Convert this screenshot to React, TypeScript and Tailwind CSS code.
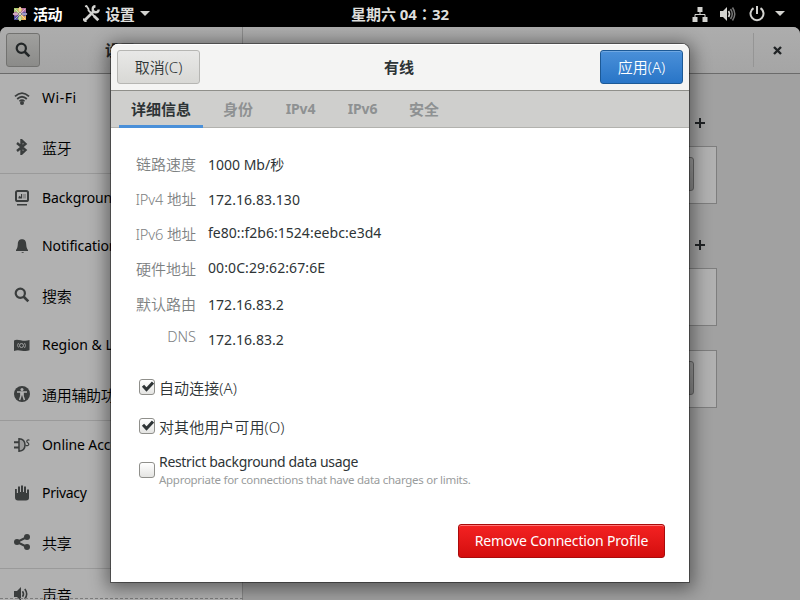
import type { ReactNode } from "react";

const FONT = "font-['Noto_Sans','Noto_Sans_CJK_SC',sans-serif]";

function Icon({ name }: { name: string }) {
  const stroke = { fill: "none", stroke: "currentColor", strokeWidth: 2 };
  return (
    <svg className="h-4 w-4 shrink-0" viewBox="0 0 16 16" fill="currentColor">
      {name === "wifi" && (
        <>
          <path d="M1 6.4Q8 -.2 15 6.4" {...stroke} strokeWidth={1.8} />
          <path d="M3.2 9Q8 4.5 12.8 9" {...stroke} strokeWidth={1.8} />
          <path d="M5.4 11.2Q8 9 10.6 11.2" {...stroke} strokeWidth={1.5} />
          <circle cx="8" cy="13" r="2" />
        </>
      )}
      {name === "bluetooth" && (
        <path d="M3 4l8.500 7-4 3.800V1.200l4 3.800L3 12" {...stroke} strokeWidth={2.4} />
      )}
      {name === "background" && (
        <>
          <rect x="2" y="1" width="12" height="10" rx="1.6" {...stroke} />
          <path d="M3 14h10v1.500H3zM4.500 8.500V7l1.200-1.200L7 7V4h1v4.500z" />
          <path d="M8.500 4H12v4.500H8.500z" opacity=".3" />
        </>
      )}
      {name === "bell" && (
        <path d="M8 1.200c-3.300 0-4 2.200-4.200 5C3.600 9.400 3.100 10.600 2 12v1h12v-1c-1.100-1.400-1.600-2.600-1.800-5.800C12 3.400 11.300 1.200 8 1.200zM7 14h3l-1 1z" />
      )}
      {name === "search" && (
        <>
          <circle cx="6.300" cy="6.300" r="4.600" {...stroke} strokeWidth={2.2} />
          <path d="M9.500 9.500l4.800 4.800" {...stroke} strokeWidth={2.6} />
        </>
      )}
      {name === "region" && (
        <>
          <path d="M0 3.500C4 1 9 5.500 15.500 3v10.200C10 15.500 5 11.500 0 14z" />
          <circle cx="7.500" cy="8.500" r="2" fill="none" stroke="#aaa" strokeWidth=".9" />
          <path d="M4.500 6Q2.500 8.500 4.500 10.500M10.500 6Q12.500 8.500 10.500 11" stroke="#999" strokeWidth="1" fill="none" />
        </>
      )}
      {name === "access" && (
        <>
          <circle cx="8" cy="8" r="8" />
          <circle cx="8" cy="3.600" r="1.500" fill="#b1b1b1" />
          <path d="M3 6h10M8 5.500v4M6.900 6.500v3.500L5.600 14M9.100 6.500v3.500l1.300 4" stroke="#b1b1b1" strokeWidth="1.500" fill="none" />
        </>
      )}
      {name === "online" && (
        <>
          <path d="M5 1.800c4 .3 6 2.800 6 6.200s-2 5.900-6 6.200z" fill="#9a9a9a" stroke="currentColor" strokeWidth="1.500" />
          <path d="M0 5.200h5M0 10.500h5" {...stroke} />
          <path d="M15.500 3.200c-2-.7-3 .2-2.700 1.500.3 1.200 2 1 2 2.500 0 1.200-1.300 1.800-3.300 1.200" {...stroke} strokeWidth={1.200} />
        </>
      )}
      {name === "privacy" && (
        <path d="M1 4h1.800v4H4V1.500h2V7h1V.5h2V7h1V1.500h2V8h1V4.500h2v8.500c0 1.500-1 2.500-3 2.500H4c-2 0-3-1-3-3z" />
      )}
      {name === "share" && (
        <>
          <circle cx="3" cy="8" r="3" />
          <circle cx="13" cy="3" r="3" />
          <circle cx="13" cy="13" r="3" />
          <path d="M13 3L3 8l10 5" {...stroke} />
        </>
      )}
      {name === "sound" && (
        <>
          <path d="M0 5h3l4-4v14l-4-4H0z" />
          <path d="M8.500 5.200q2 2.800 0 5.600M10.800 3q3.800 5 0 10" {...stroke} strokeWidth={1.600} />
        </>
      )}
    </svg>
  );
}

const sidebar = [
  { icon: "wifi", text: "Wi-Fi", row: "h-[49px] pb-[2px]", font: "text-[14px] tracking-[.5px]" },
  { icon: "bluetooth", text: "蓝牙", row: "h-[51px] border-b border-[#9a9a9a] pb-[2px]", font: "font-[350] text-[15px] tracking-[-.3px] pt-[2px]" },
  { icon: "background", text: "Background", row: "h-[48px]", font: "text-[14px] tracking-[-.1px]" },
  { icon: "bell", text: "Notifications", row: "h-[49px] pb-[2px]", font: "text-[14px] tracking-[-.1px]" },
  { icon: "search", text: "搜索", row: "h-[50px] pb-[2px]", font: "font-[350] text-[15px] tracking-[-.3px] pt-[2px]" },
  { icon: "region", text: "Region & Language", row: "h-[48px]", font: "text-[14px]" },
  { icon: "access", text: "通用辅助功能", row: "h-[52px] border-b border-[#9a9a9a] pb-[2px]", font: "font-[350] text-[15px] tracking-[-.3px] pt-[2px]" },
  { icon: "online", text: "Online Accounts", row: "h-[48px]", font: "text-[14px] tracking-[-.1px]" },
  { icon: "privacy", text: "Privacy", row: "h-[49px] pb-[2px]", font: "text-[14px] tracking-[-.3px]" },
  { icon: "share", text: "共享", row: "h-[51px] border-b border-[#9a9a9a] pb-[2px]", font: "font-[350] text-[15px] tracking-[-.3px] pt-[2px]" },
  { icon: "sound", text: "声音", row: "h-[50px]", font: "font-[350] text-[15px] tracking-[-.3px] pt-px" },
];

function TopBar() {
  return (
    <header className="flex h-[27px] items-center bg-black text-[15px] font-bold text-[#dededc]">
      <div className="flex flex-1 items-center">
        <svg className="ml-3 h-4 w-4" viewBox="0 0 16 16">
          <path d="M2 2h5v5H2z" fill="#aacb72" />
          <path d="M9 2h5v5H9z" fill="#b774a6" />
          <path d="M2 9h5v5H2z" fill="#4d4ba0" />
          <path d="M9 9h5v5H9z" fill="#efb256" />
          <path d="M8 .5l2.500 3L8 7 5.500 3.500z" fill="#e9b96a" />
          <path d="M.5 8l3-2.500L7 8l-3.500 2.500z" fill="#b774a6" />
          <path d="M15.500 8l-3-2.500L9 8l3.500 2.500z" fill="#5d5aa8" />
          <path d="M8 15.500l2.500-3L8 9l-2.500 3.500z" fill="#aacb72" />
          <path d="M8 1v14M1 8h14" stroke="#f3ede0" strokeWidth=".9" />
          <path d="M3 3l10 10M13 3L3 13" stroke="#f3ede0" strokeWidth=".6" />
        </svg>
        <span className="ml-[5px] leading-5 text-white tracking-[-.4px]">活动</span>
        <svg className="ml-[21px] h-[17px] w-[17px]" viewBox="0 0 17 17" fill="none" stroke="#d3d3d0">
          <path d="M2 1.500l1.500-.5 2 3v1.500l6 6" strokeWidth="1.800" />
          <path d="M11 11l4.300 4.300M2 15L11 6" strokeWidth="2.800" />
          <path d="M12.500 1.300a3 3 0 1 0 3.200 3.200" strokeWidth="2.400" />
          <path d="M1 13.500a2 2 0 0 0 2.500 2.500" strokeWidth="2" />
        </svg>
        <span className="ml-[5px] leading-5 tracking-[-.4px]">设置</span>
        <svg className="ml-[6px] h-[5px] w-[10px]" viewBox="0 0 10 5"><path d="M0 0h10L5 5z" fill="#d3d3d0" /></svg>
      </div>
      <span className="w-[100px] whitespace-nowrap text-center leading-5">
        星期六 04<span className="font-['Noto_Sans_CJK_JP',sans-serif]" lang="ja">：</span>32
      </span>
      <div className="flex flex-1 items-center justify-end">
        <svg className="h-4 w-4" viewBox="0 0 16 16" fill="#d3d3d0">
          <path d="M5.500 1h5v5h-5zM.5 11h5v5h-5zM10.500 11h5v5h-5z" />
          <path d="M8 6v2.500M3 11V8.500h10V11" fill="none" stroke="#d3d3d0" />
        </svg>
        <svg className="ml-3 h-4 w-4" viewBox="0 0 16 16" fill="#d3d3d0">
          <path d="M0 5h3l4-4v14l-4-4H0z" />
          <path d="M8.500 5q2 3 0 6" fill="none" stroke="#d3d3d0" strokeWidth="1.600" />
          <path d="M10.500 3q3.500 5 0 10M12.500 1.500q4.500 6.500 0 13" fill="none" stroke="#777" strokeWidth="1.500" />
        </svg>
        <svg className="ml-[13px] h-4 w-4" viewBox="0 0 16 16" fill="none" stroke="#d3d3d0" strokeWidth="2">
          <path d="M4.500 2.200a6.500 6.500 0 1 0 7 0M8 0V8" />
        </svg>
        <svg className="mr-[15px] ml-[10px] h-[5px] w-[10px]" viewBox="0 0 10 5"><path d="M0 0h10L5 5z" fill="#d3d3d0" /></svg>
      </div>
    </header>
  );
}

function Plus({ className }: { className: string }) {
  return (
    <svg className={className} viewBox="0 0 10 10"><path d="M5 0v10M0 5h10" stroke="#202325" strokeWidth="2" /></svg>
  );
}

function Card({ button, className }: { button?: boolean; className: string }) {
  return (
    <div className={`flex h-[58px] w-[392px] items-center justify-end border border-[#7e7e7e] bg-[#b1b1b1] ${className}`}>
      {button && <div className="mr-[22px] mb-[2px] h-[34px] w-[40px] rounded-[3px] border border-[#666] bg-linear-to-b from-[#9c9c9c] to-[#888]" />}
    </div>
  );
}

function SettingsWindow() {
  return (
    <div className="flex h-[573px] flex-col overflow-hidden rounded-t-[7px] bg-[#a1a1a1]">
      <div className="flex h-[47px] shrink-0 border-b border-[#6b6b6b] bg-linear-to-b from-[#adadad] to-[#a5a5a5]">
        <div className="flex w-[243px] items-center border-r border-[#8c8c8c]">
          <div className="mt-[-1px] ml-[6px] flex h-[34px] w-[34px] items-center justify-center rounded-[3px] border border-[#727270] bg-linear-to-b from-[#a0a09e] to-[#8b8b89] text-[#222627]">
            <Icon name="search" />
          </div>
          <span className="ml-[65px] text-[15px] font-bold text-[#222627]">设置</span>
        </div>
        <div className="flex flex-1 justify-center pt-[14px] text-[15px] font-bold leading-5 text-[#222627]"><span className="ml-[59px]">网络</span></div>
        <div className="mt-[6px] flex h-[34px] w-[47px] items-center justify-center border-l border-[#959595]">
          <svg className="h-[9px] w-[9px]" viewBox="0 0 9 9"><path d="M1 1l7 7M8 1L1 8" stroke="#202325" strokeWidth="2.400" /></svg>
        </div>
      </div>
      <div className="flex min-h-0 flex-1">
        <nav className="w-[243px] shrink-0 border-r border-[#888] bg-[#b1b1b1]">
          {sidebar.map((s) => (
            <div key={s.text} className={`flex items-center pl-[14px] text-[#3a3d3d] ${s.row}`}>
              <Icon name={s.icon} />
              <span className={`ml-3 whitespace-nowrap leading-5 text-black ${s.font}`}>{s.text}</span>
            </div>
          ))}
        </nav>
        <main className="flex flex-1 flex-col pl-[82px]">
          <Plus className="mt-[44px] ml-[370px] h-[10px] w-[10px]" />
          <Card button className="mt-[18px]" />
          <Plus className="mt-[36px] ml-[370px] h-[10px] w-[10px]" />
          <Card className="mt-[18px]" />
          <Card button className="mt-6" />
        </main>
      </div>
      <div className="-mt-[2px] mb-px w-[243px] border-t border-dashed border-[#7c7c7c]" />
    </div>
  );
}

const details = [
  { label: "链路速度", value: "1000 Mb/秒", lc: "text-[15px] -mt-[2px]", vc: "pt-px" },
  { label: "IPv4 地址", value: "172.16.83.130", lc: "text-[14.600px] tracking-[-.1px] -mt-[2px]", vc: "tracking-[.05px]" },
  { label: "IPv6 地址", value: "fe80::f2b6:1524:eebc:e3d4", lc: "text-[14.600px] tracking-[-.1px] -mt-[2px]", vc: "-mt-[4px] tracking-[.03px]" },
  { label: "硬件地址", value: "00:0C:29:62:67:6E", lc: "text-[15px] -mt-[2px]", vc: "-mt-[4px] tracking-[.1px]" },
  { label: "默认路由", value: "172.16.83.2", lc: "text-[15px] -mt-[2px]", vc: "tracking-[.05px]" },
  { label: "DNS", value: "172.16.83.2", lc: "text-[14.500px] -mt-[7px]", vc: "tracking-[.05px]" },
];

function Check({ checked }: { checked?: boolean }) {
  return (
    <span className="flex h-4 w-4 shrink-0 items-center justify-center rounded-[3px] border border-[#8f8f8b] bg-linear-to-b from-white to-[#e4e4e2]">
      {checked && (
        <svg className="-mt-px h-[11px] w-[13px]" viewBox="0 0 13 11"><path d="M2 4.700l3.500 3.800L12 1.500" fill="none" stroke="#2e3436" strokeWidth="3" /></svg>
      )}
    </span>
  );
}

function Tab({ children, className }: { children: ReactNode; className: string }) {
  return <div className={`flex h-[37px] items-center justify-center border-[#4a90d9] font-bold leading-5 ${className}`}>{children}</div>;
}

function Dialog() {
  return (
    <section className="absolute top-[44px] left-[111px] flex h-[538px] w-[578px] flex-col overflow-hidden rounded-t-[7px] bg-white text-[#2e3436] shadow-[0_0_0_1px_rgba(0,0,0,.4),0_3px_18px_4px_rgba(0,0,0,.45)]">
      <div className="flex h-[47px] shrink-0 items-start justify-between border-b border-[#8f8f8a] bg-[#f4f4f3] px-[6px] pt-[6px] text-[15px] shadow-[inset_0_1px_white]">
        <button className="h-[34px] w-[83px] rounded-[3px] border border-[#b6b6b3] bg-linear-to-b from-[#e8e8e7] to-[#d8d8d5] pt-px text-[15px] font-[350]">取消(C)</button>
        <span className="mr-[2px] pt-[7px] font-bold leading-5">有线</span>
        <button className="h-[34px] w-[83px] rounded-[3px] border border-[#1c5996] bg-linear-to-b from-[#4a90d9] to-[#2875c7] pt-px text-[15px] font-[350] text-white shadow-[inset_0_1px_#70a8e2]">应用(A)</button>
      </div>
      <div className="flex h-[37px] shrink-0 border-b border-[#b2b2ae] bg-[#cfcfcd] pl-2 text-[15px] text-[#8e9192]">
        <Tab className="w-[84px] border-b-[3px] pt-px text-[#2e3436]">详细信息</Tab>
        <Tab className="ml-[14px] w-[42px] pb-[2px]">身份</Tab>
        <Tab className="ml-[20px] w-[42px] pb-[2px] pl-px text-[14px] tracking-[-.1px]">IPv4</Tab>
        <Tab className="ml-[20px] w-[42px] pb-[2px] pl-px text-[14px] tracking-[-.1px]">IPv6</Tab>
        <Tab className="ml-[20px] w-[42px] pb-[2px]">安全</Tab>
      </div>
      <div className="flex min-h-0 flex-1 flex-col">
        <div className="mt-[19px] ml-5">
          {details.map((d) => (
            <div key={d.label} className="flex h-[35px] items-center leading-5">
              <span className={`w-[65px] whitespace-nowrap text-right font-[350] text-[#7d8182] ${d.lc}`}>{d.label}</span>
              <span className={`ml-3 whitespace-nowrap text-[14px] ${d.vc}`}>{d.value}</span>
            </div>
          ))}
        </div>
        <label className="mt-[20px] ml-7 flex h-5 items-center gap-1 text-[15px] leading-5"><Check checked /><span className="pt-[2px] font-[350] tracking-[.07px]">自动连接(A)</span></label>
        <label className="mt-[19px] ml-7 flex h-5 items-center gap-1 text-[15px] leading-5"><Check checked /><span className="pt-[2px] font-[350] tracking-[.07px]">对其他用户可用(O)</span></label>
        <label className="mt-[15px] ml-7 flex h-[38px] items-center gap-1">
          <span className="pb-px"><Check /></span>
          <span className="flex flex-col">
            <span className="text-[14px] leading-5 tracking-[-.32px]">Restrict background data usage</span>
            <span className="text-[11.500px] leading-4 tracking-[-.28px] text-[#999c9c]">Appropriate for connections that have data charges or limits.</span>
          </span>
        </label>
        <button className="mt-auto mr-6 mb-6 h-[34px] w-[207px] self-end whitespace-nowrap rounded-[3px] border border-[#aa0b0b] bg-linear-to-b from-[#f42222] to-[#d40d0d] pb-[2px] text-[14px] tracking-[-.17px] text-white shadow-[inset_0_1px_#f77]">Remove Connection Profile</button>
      </div>
    </section>
  );
}

export default function App() {
  return (
    <div className={`relative h-[600px] w-[800px] overflow-hidden bg-black ${FONT}`}>
      <TopBar />
      <SettingsWindow />
      <Dialog />
    </div>
  );
}
